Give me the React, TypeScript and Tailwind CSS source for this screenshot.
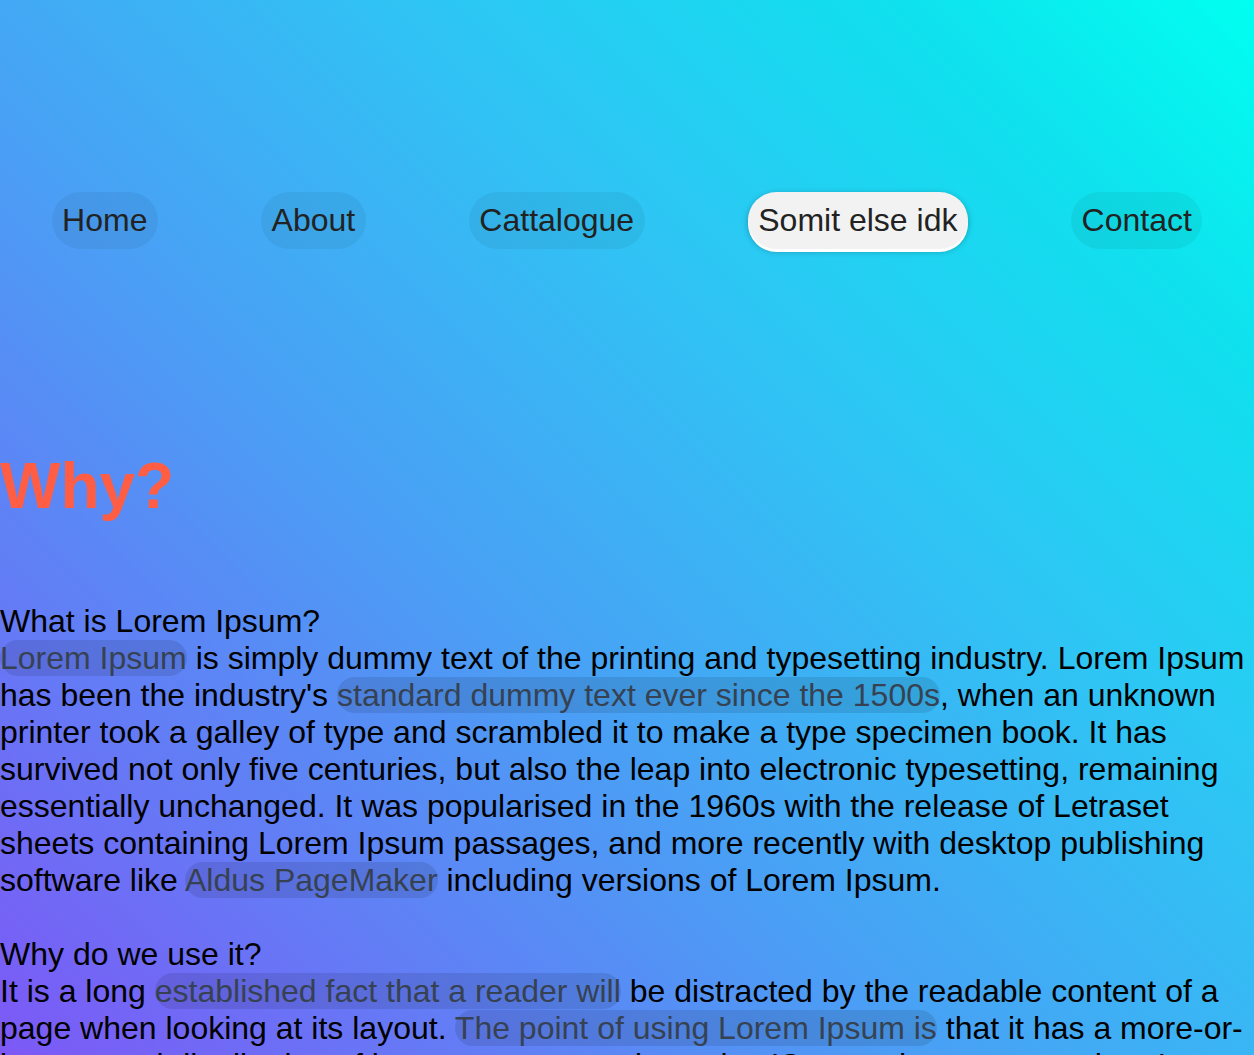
import React from "react";

const links = ["Home", "About", "Cattalogue", "Somit else idk", "Contact"];

function Mark({ children }: { children: React.ReactNode }) {
  return <span className="rounded-full bg-black/10 text-[#364252]">{children}</span>;
}

export default function App() {
  const active = "Somit else idk";

  return (
    <div className="min-h-screen bg-fixed bg-[linear-gradient(45deg,#7d58f6_0%,#4a9ff5_40%,#2cc8f4_66%,#10e0ee_84%,#00fff0_100%)] font-['Liberation_Sans',Arial,sans-serif] text-[32px] leading-[37px] text-black">
      {/* Nav */}
      <nav className="flex justify-around pt-[192px]">
        {links.map((name) => {
          const isActive = name === active;
          return (
            <a
              key={name}
              href="#"
              className={`rounded-full px-[10.5px] py-[10px] text-[#222] ${
                isActive
                  ? "bg-[#f2f2f2] shadow-[0_3px_0_#fff,0_2px_6px_rgba(0,0,0,0.3)]"
                  : "bg-black/5"
              }`}
            >
              {name}
            </a>
          );
        })}
      </nav>

      <h1 className="mt-[200px] text-[64px] leading-[74px] font-bold text-[#ff5e44]">Why?</h1>

      <div className="mt-[80px]">
        <p>What is Lorem Ipsum?</p>
        <p>
          <Mark>Lorem Ipsum</Mark> is simply dummy text of the printing and typesetting industry. Lorem Ipsum
          has been the industry's <Mark>standard dummy text ever since the 1500s</Mark>, when an unknown printer
          took a galley of type and scrambled it to make a type specimen book. It has survived not only five
          centuries, but also the leap into electronic typesetting, remaining essentially unchanged. It was
          popularised in the 1960s with the release of Letraset sheets containing Lorem Ipsum passages, and more
          recently with desktop publishing software like <Mark>Aldus PageMaker</Mark> including versions of Lorem
          Ipsum.
        </p>

        <p className="mt-[37px]">Why do we use it?</p>
        <p>
          It is a long <Mark>established fact that a reader will</Mark> be distracted by the readable content of
          a page when looking at its layout. <Mark>The point of using Lorem Ipsum is</Mark> that it has a
          more-or-less normal distribution of letters, as opposed to using 'Content here, content here', making it
          look like readable English. Many desktop publishing packages and web page editors now use Lorem Ipsum as
          their default model text, and a search for 'lorem ipsum' will uncover many web sites still in their
          infancy.
        </p>
      </div>
    </div>
  );
}
